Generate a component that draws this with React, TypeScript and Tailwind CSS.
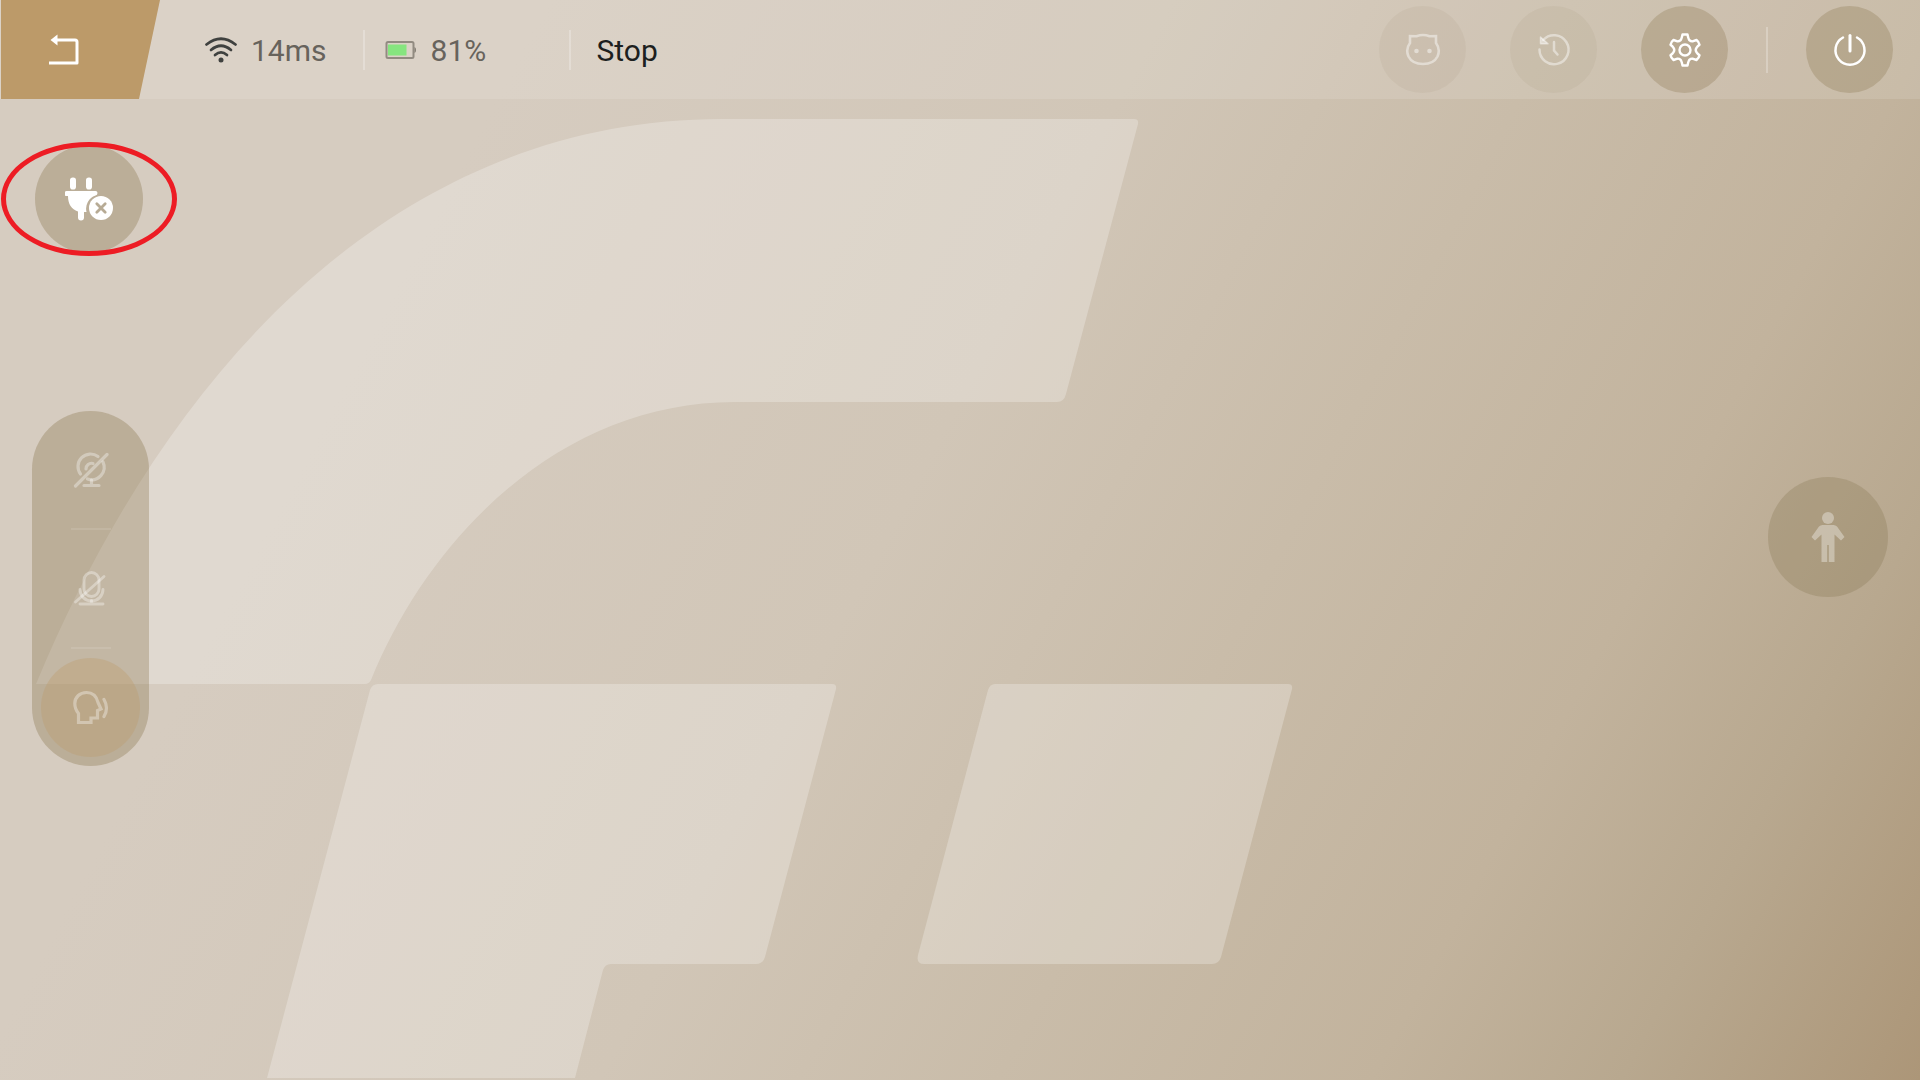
import type { ReactNode } from "react";

const Backdrop = () => (
  <svg
    className="absolute inset-0 h-full w-full"
    viewBox="0 0 1920 1080"
    preserveAspectRatio="xMinYMin slice"
    fill="#fff"
    fillOpacity="0.25"
    aria-hidden="true"
  >
    <path d="M36 684C174 352 408 119 722 119H1134Q1139 119 1138 124L1066 394Q1064 402 1057 402H735C562 402 430 535 371 680Q369 684 365 684Z" />
    <path d="M378 684H832Q837 684 836 689L765 957Q763 964 756 964H611Q605 964 603 970L575 1078H267L370 690Q372 684 378 684Z" />
    <path d="M995 684H1288Q1293 684 1292 689L1221 957Q1219 964 1212 964H924Q916 964 918 955L988 690Q990 684 995 684Z" />
  </svg>
);

const BackIcon = () => (
  <svg className="h-8 w-8" viewBox="0 0 32 32" fill="none" stroke="#fff" strokeWidth="3">
    <path d="M7 6H26Q28 6 28 8V29H0" strokeLinejoin="round" />
    <path d="M1.500 6L8.500 .5V11.500Z" fill="#fff" stroke="none" />
  </svg>
);

const WifiIcon = () => (
  <svg className="h-7 w-8" viewBox="0 0 32 28" fill="none" stroke="#3f413f" strokeWidth="2.7" strokeLinecap="round">
    <path d="M1.500 8.500Q16 -3 30.500 8.500" />
    <path d="M6 14Q16 5.500 26 14" />
    <path d="M10 19Q16 13.600 22 19" />
    <circle cx="16" cy="24" r="2.500" fill="#3f413f" stroke="none" />
  </svg>
);

const BatteryIcon = () => (
  <svg className="h-5 w-8" viewBox="0 0 32 20" fill="none">
    <rect x="1.500" y="2" width="27" height="16" rx="1.500" stroke="#928b81" strokeWidth="2" />
    <rect x="3" y="4.500" width="18.500" height="11" fill="#86e57f" />
    <path d="M29.500 7Q31 7.500 31 10T29.500 13Z" fill="#7f796f" />
  </svg>
);

const CatIcon = () => (
  <svg className="h-9 w-9" viewBox="0 0 36 36" fill="none" stroke="currentColor" strokeWidth="2.6">
    <path d="M5 4V11C2 15 1.500 20 3.500 24.500C6 29.500 11.500 32 18 32S30 29.500 32.500 24.500C34.500 20 34 15 31 11V4L24.500 4.300Q18 1.800 11.500 4.300Z" />
    <circle cx="11.500" cy="19" r="2.300" fill="currentColor" stroke="none" />
    <circle cx="24.500" cy="19" r="2.300" fill="currentColor" stroke="none" />
  </svg>
);

const HistoryIcon = () => (
  <svg className="h-9 w-9" viewBox="0 0 36 36" fill="none" stroke="currentColor" strokeWidth="2.500" strokeLinecap="round">
    <path d="M7.200 8A14.500 14.500 0 1 1 3.500 17.500" />
    <path d="M18 10V18.500L21.500 22.500" />
    <path d="M4.500 5L12 11.800H4.500Z" fill="currentColor" strokeWidth="1.500" strokeLinejoin="round" />
  </svg>
);

const GearIcon = () => (
  <svg className="h-9 w-9" viewBox="0 0 36 36" fill="none" stroke="#fff" strokeWidth="2.4" strokeLinejoin="round">
    <path d="M15.500 2.500H20.500Q21.500 7.500 22.500 8.300Q24 9.500 25.500 9.300L29.500 8Q32 10 32.500 12.700Q28.700 15.500 28.700 18T32.500 23.300Q32 26 29.500 28L25.500 26.700Q24 26.500 22.500 27.700Q21.500 28.500 20.500 33.500H15.500Q14.500 28.500 13.500 27.700Q12 26.500 10.500 26.700L6.500 28Q4 26 3.500 23.300Q7.300 20.500 7.300 18T3.500 12.700Q4 10 6.500 8L10.500 9.300Q12 9.500 13.500 8.300Q14.500 7.500 15.500 2.500Z" />
    <circle cx="18" cy="18" r="5.500" />
  </svg>
);

const PowerIcon = () => (
  <svg className="h-9 w-9" viewBox="0 0 36 36" fill="none" stroke="#fff" strokeWidth="2.500" strokeLinecap="round">
    <path d="M11 5.500A14.500 14.500 0 1 0 25 5.500" />
    <path d="M18 3.500V19" strokeWidth="3" />
  </svg>
);

const PlugIcon = () => (
  <svg className="h-12 w-12" viewBox="0 0 48 48" fill="#fff">
    <rect x="5" y="2.500" width="6" height="12" rx="2.800" />
    <rect x="21" y="2.500" width="6" height="12" rx="2.800" />
    <path d="M1.500 16H30.500Q32.500 16 32.500 18T30.500 20.500A14 14 0 0 0 21.500 37H19V42.500Q19 45.500 16 45.500T13 42.500V36.500C6.500 34.500 3 29 3 21H1.500Q-.5 21-.5 18.500T1.500 16Z" />
    <circle cx="36" cy="33" r="12" />
    <path d="M31.800 28.800L40.200 37.200M40.200 28.800L31.800 37.200" stroke="#b7ab95" strokeWidth="2.800" strokeLinecap="round" />
  </svg>
);

const CameraOffIcon = () => (
  <svg className="h-9 w-9" viewBox="0 0 36 36" fill="none" stroke="currentColor" strokeWidth="3.200" strokeLinecap="round">
    <path d="M7.500 22A12.500 12.500 0 0 1 25 4.500" />
    <path d="M30 10A12.500 12.500 0 0 1 14.500 27" />
    <path d="M13 17A5.500 5.500 0 0 1 20 11.500" />
    <path d="M18.500 28V33M11 33.500H26" />
    <path d="M2.500 34L34 2.500" />
  </svg>
);

const MicOffIcon = () => (
  <svg className="h-9 w-9" viewBox="0 0 36 36" fill="none" stroke="currentColor" strokeWidth="2.900" strokeLinecap="round">
    <rect x="11" y="1.500" width="15" height="24" rx="7.500" />
    <path d="M7 18.500A11.500 11.500 0 0 0 30 18.500" />
    <path d="M18.500 29.500V33M7 33H30" />
    <path d="M2.500 31L31 5.500" />
  </svg>
);

const SpeakIcon = () => (
  <svg className="h-9 w-9" viewBox="0 0 36 36" fill="none" stroke="currentColor" strokeWidth="3.200">
    <path d="M5.500 32.500H18V28H24.500V20.500L28 19L25 12.500C23.500 6 19 2.500 13.500 2.500C6.500 2.500 1.800 7.500 1.800 13.500C1.800 17.500 3 20.500 5.500 23.500Z" />
    <path d="M31 9.500Q36 18 31 26.500" strokeLinecap="round" />
  </svg>
);

const PersonIcon = () => (
  <svg className="h-13 w-9" viewBox="0 0 36 52" fill="currentColor">
    <circle cx="18" cy="7" r="6" />
    <path d="M12.500 14H23.500Q25.500 14 27 15.500L34.500 26L31 29.500L24.500 23.500V51H18.800V34H17.200V51H11.500V23.500L5 29.500L1.500 26L9 15.500Q10.500 14 12.500 14Z" />
  </svg>
);

type RoundButtonProps = { label: string; disabled?: boolean; children: ReactNode };

const RoundButton = ({ label, disabled, children }: RoundButtonProps) => (
  <button
    type="button"
    aria-label={label}
    disabled={disabled}
    className="flex h-[87px] w-[87px] items-center justify-center rounded-full bg-[#6b5020]/20 text-white disabled:bg-[#6b5020]/5 disabled:text-white/45"
  >
    {children}
  </button>
);

const Header = () => (
  <header className="flex h-[99px] items-center justify-between bg-white/12 pr-[27px]">
    <div className="flex h-full items-center text-3xl text-[#67635c]">
      <button
        type="button"
        aria-label="Back"
        className="ml-px flex h-full w-[159px] items-center bg-[#bc9a69] pl-12 [clip-path:polygon(0_0,100%_0,138px_100%,0_100%)]"
      >
        <BackIcon />
      </button>
      <div className="ml-[45px] flex items-center gap-[14px]">
        <WifiIcon />
        <span className="pt-0.5">14ms</span>
      </div>
      <div className="ml-9 h-10 w-0.5 bg-white/25" />
      <div className="ml-5 flex w-[184px] items-center gap-[14px]">
        <BatteryIcon />
        <span className="pt-0.5">81%</span>
      </div>
      <div className="h-10 w-0.5 bg-white/25" />
      <span className="ml-[26px] pt-0.5 text-[#1d1f20]">Stop</span>
    </div>
    <div className="flex items-center gap-11">
      <RoundButton label="Avatar" disabled>
        <CatIcon />
      </RoundButton>
      <RoundButton label="History" disabled>
        <HistoryIcon />
      </RoundButton>
      <div className="flex items-center gap-[38px]">
        <RoundButton label="Settings">
          <GearIcon />
        </RoundButton>
        <div className="h-[46px] w-0.5 bg-white/25" />
        <RoundButton label="Power">
          <PowerIcon />
        </RoundButton>
      </div>
    </div>
  </header>
);

const MediaPanel = () => (
  <div className="flex w-[117px] flex-col items-center rounded-full bg-[#6a541f]/25 pb-[9px] text-white/35">
    <button type="button" aria-label="Camera" disabled className="flex h-[117px] w-full items-center justify-center">
      <CameraOffIcon />
    </button>
    <div className="h-0.5 w-10 bg-white/10" />
    <button type="button" aria-label="Microphone" disabled className="flex h-[117px] w-full items-center justify-center">
      <MicOffIcon />
    </button>
    <div className="h-0.5 w-10 bg-white/10" />
    <button
      type="button"
      aria-label="Speak"
      disabled
      className="mt-[9px] flex h-[99px] w-[99px] items-center justify-center rounded-full bg-[#bc9a69]/35"
    >
      <SpeakIcon />
    </button>
  </div>
);

const App = () => {
  return (
    <div className="relative flex min-h-screen flex-col overflow-hidden bg-[linear-gradient(118deg,#d6ccc0_0%,#d6ccc0_22%,#d1c6b7_47%,#c9bca9_63%,#c2b39d_78%,#b8a88f_88%,#ac9678_100%)] font-[Roboto,sans-serif]">
      <Backdrop />
      <div className="relative flex flex-1 flex-col">
        <Header />
        <main className="flex flex-1 items-start justify-between px-8">
          <div className="flex flex-col items-start gap-[158px] pt-[46px]">
            <div className="px-[3px]">
              <div className="relative">
                <button
                  type="button"
                  aria-label="Disconnect"
                  className="flex h-[108px] w-[108px] items-center justify-center rounded-full bg-[#6a541f]/25"
                >
                  <PlugIcon />
                </button>
                {/* highlight ring around the plug */}
                <div className="pointer-events-none absolute -inset-x-[34px] -inset-y-[3px] rounded-[50%] border-[5px] border-[#ed1c24]" />
              </div>
            </div>
            <MediaPanel />
          </div>
          <button
            type="button"
            aria-label="Posture"
            disabled
            className="mt-[378px] flex h-[120px] w-[120px] items-center justify-center rounded-full bg-[#7c6a42]/25 text-white/35"
          >
            <PersonIcon />
          </button>
        </main>
      </div>
    </div>
  );
};

export default App;
